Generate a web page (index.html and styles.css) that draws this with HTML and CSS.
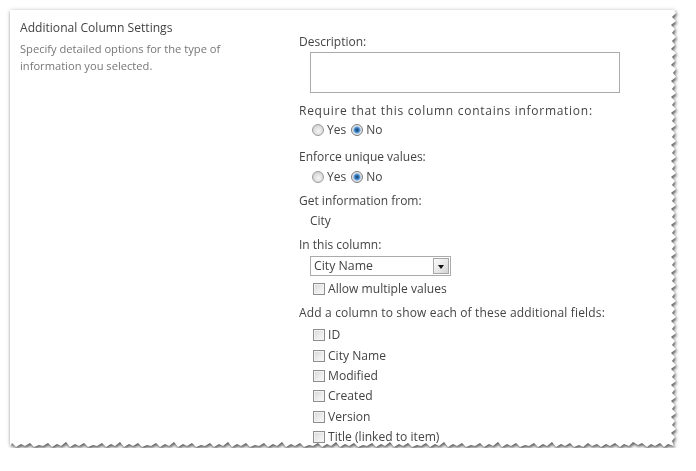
FILE: index.html
```html
<!DOCTYPE html>
<html lang="en">
<head>
<meta charset="utf-8">
<title>Additional Column Settings</title>
<link rel="stylesheet" href="styles.css">
</head>
<body>
<div class="sheet">
  <div class="paper">
    <div class="info">
      <div class="info-title">Additional Column Settings</div>
      <div class="info-desc">Specify detailed options for the type of information you selected.</div>
    </div>
    <div class="body">
      <div class="group">
        <div class="lbl">Description:</div>
        <textarea class="textarea"></textarea>
      </div>
      <div class="group g-require">
        <div class="lbl lbl-wide">Require that this column contains information:</div>
        <div class="radios">
          <label class="opt"><span class="radio"></span>Yes</label>
          <label class="opt"><span class="radio checked"></span>No</label>
        </div>
      </div>
      <div class="group g-unique">
        <div class="lbl">Enforce unique values:</div>
        <div class="radios">
          <label class="opt"><span class="radio"></span>Yes</label>
          <label class="opt"><span class="radio checked"></span>No</label>
        </div>
      </div>
      <div class="group g-get">
        <div class="lbl">Get information from:</div>
        <div class="value">City</div>
      </div>
      <div class="group g-col">
        <div class="lbl">In this column:</div>
        <div class="select">
          <span class="select-text">City Name</span>
          <span class="select-btn"><span class="tri"></span></span>
        </div>
        <label class="check-row"><span class="check"></span>Allow multiple values</label>
      </div>
      <div class="group g-add">
        <div class="lbl lbl-add">Add a column to show each of these additional fields:</div>
        <div class="checks">
          <label class="check-row"><span class="check"></span>ID</label>
          <label class="check-row"><span class="check"></span>City Name</label>
          <label class="check-row"><span class="check"></span>Modified</label>
          <label class="check-row"><span class="check"></span>Created</label>
          <label class="check-row"><span class="check"></span>Version</label>
          <label class="check-row"><span class="check"></span>Title (linked to item)</label>
        </div>
      </div>
    </div>
  </div>
</div>
</body>
</html>
```
FILE: styles.css
```css
html, body {
  margin: 0;
  background: #ffffff;
}

body {
  font-family: "Open Sans", "Noto Sans", "Liberation Sans", sans-serif;
  font-size: 12px;
  color: #444444;
}

.sheet {
  margin: 10px 0 0 10px;
  width: 666px;
  height: 438px;
  filter: drop-shadow(0 0 2px rgba(0, 0, 0, 0.16)) drop-shadow(1px 2px 1.5px rgba(0, 0, 0, 0.6));
}

.paper {
  box-sizing: border-box;
  height: 100%;
  background: #ffffff;
  padding: 9px 0 0 10px;
  display: grid;
  grid-template-columns: 279px 1fr;
  align-items: start;
  clip-path: polygon(0px 0px, 664px 0px, 666px 3px, 662px 7px, 666px 11px, 661px 15px, 665px 19px, 662px 23px, 666px 27px, 662px 31px, 665px 35px, 661px 39px, 666px 43px, 662px 47px, 665px 51px, 661px 55px, 666px 59px, 663px 63px, 666px 67px, 661px 71px, 665px 75px, 662px 79px, 666px 83px, 661px 87px, 665px 91px, 662px 95px, 666px 99px, 661px 103px, 665px 107px, 662px 111px, 666px 115px, 661px 119px, 665px 123px, 662px 127px, 666px 131px, 661px 135px, 665px 139px, 662px 143px, 666px 147px, 661px 151px, 665px 155px, 662px 159px, 666px 163px, 661px 167px, 665px 171px, 662px 175px, 666px 179px, 661px 183px, 665px 187px, 662px 191px, 666px 195px, 661px 199px, 665px 203px, 662px 207px, 666px 211px, 661px 215px, 665px 219px, 662px 223px, 666px 227px, 661px 231px, 665px 235px, 662px 239px, 666px 243px, 661px 247px, 665px 251px, 662px 255px, 666px 259px, 661px 263px, 665px 267px, 662px 271px, 666px 275px, 661px 279px, 665px 283px, 662px 287px, 666px 291px, 661px 295px, 665px 299px, 662px 303px, 666px 307px, 661px 311px, 665px 315px, 662px 319px, 666px 323px, 661px 327px, 665px 331px, 662px 335px, 666px 339px, 661px 343px, 665px 347px, 662px 351px, 666px 355px, 661px 359px, 665px 363px, 662px 367px, 666px 371px, 661px 375px, 665px 379px, 662px 383px, 666px 387px, 661px 391px, 665px 395px, 662px 399px, 666px 403px, 661px 407px, 665px 411px, 662px 415px, 666px 419px, 661px 423px, 665px 427px, 662px 431px, 664px 436px, 658px 434px, 654px 437px, 650px 433px, 645px 436px, 641px 434px, 637px 437px, 632px 433px, 628px 435px, 623px 432px, 619px 436px, 614px 434px, 610px 437px, 605px 433px, 600px 436px, 596px 434px, 591px 437px, 587px 434px, 582px 436px, 578px 433px, 573px 437px, 569px 435px, 564px 437px, 560px 433px, 555px 436px, 551px 434px, 546px 437px, 542px 432px, 537px 436px, 533px 434px, 528px 437px, 524px 433px, 519px 436px, 515px 435px, 510px 437px, 506px 433px, 501px 436px, 497px 434px, 492px 437px, 488px 432px, 483px 436px, 479px 434px, 474px 437px, 470px 433px, 465px 436px, 461px 435px, 456px 437px, 452px 433px, 447px 436px, 443px 434px, 438px 437px, 434px 432px, 429px 436px, 425px 434px, 420px 437px, 416px 433px, 411px 436px, 407px 435px, 402px 437px, 398px 433px, 393px 436px, 389px 434px, 384px 437px, 380px 432px, 375px 436px, 371px 434px, 366px 437px, 362px 433px, 357px 436px, 353px 435px, 348px 437px, 344px 433px, 339px 436px, 335px 434px, 330px 437px, 326px 432px, 321px 436px, 317px 434px, 312px 437px, 308px 433px, 303px 436px, 299px 435px, 294px 437px, 290px 433px, 285px 436px, 281px 434px, 276px 437px, 272px 432px, 267px 436px, 263px 434px, 258px 437px, 254px 433px, 249px 436px, 245px 435px, 240px 437px, 236px 433px, 231px 436px, 227px 434px, 222px 437px, 218px 432px, 213px 436px, 209px 434px, 204px 437px, 200px 433px, 195px 436px, 191px 435px, 186px 437px, 182px 433px, 177px 436px, 173px 434px, 168px 437px, 164px 432px, 159px 436px, 155px 434px, 150px 437px, 146px 433px, 141px 436px, 137px 435px, 132px 437px, 128px 433px, 123px 436px, 119px 434px, 114px 437px, 110px 432px, 105px 436px, 101px 434px, 96px 437px, 92px 433px, 87px 436px, 83px 435px, 78px 437px, 74px 433px, 69px 436px, 65px 434px, 60px 437px, 56px 432px, 51px 436px, 47px 434px, 42px 437px, 38px 433px, 33px 436px, 29px 435px, 24px 437px, 20px 433px, 15px 436px, 11px 434px, 6px 437px, 2px 433px, 0px 436px);
}

/* left column */
.info-title {
  font-size: 12.1px;
  line-height: 18px;
  color: #444444;
}

.info-desc {
  margin-top: 3px;
  width: 230px;
  font-size: 11.15px;
  line-height: 17px;
  color: #777777;
}

/* right column */
.body {
  padding-top: 14px;
}

.lbl {
  line-height: 18px;
  white-space: nowrap;
}

.lbl-wide {
  letter-spacing: 0.72px;
}

.lbl-add {
  letter-spacing: 0.16px;
}

.group + .group {
  margin-top: 6px;
}

.g-require {
  margin-top: 9px !important;
}

.g-unique {
  margin-top: 8px !important;
}

.g-get {
  margin-top: 5px !important;
}

.textarea {
  display: block;
  box-sizing: border-box;
  width: 310px;
  height: 41px;
  margin: 1px 0 0 11px;
  padding: 0;
  border: 1px solid #ababab;
  background: #ffffff;
  resize: none;
  outline: none;
}

.radios {
  display: flex;
  align-items: center;
  height: 20px;
  padding-left: 13px;
  gap: 5px;
}

.g-unique .radios {
  margin-top: 1px;
}

.opt {
  display: flex;
  align-items: center;
  gap: 3px;
  line-height: 18px;
}

.radio {
  box-sizing: border-box;
  width: 12px;
  height: 12px;
  border-radius: 50%;
  border: 1px solid #9a9a9a;
  background: radial-gradient(circle at 55% 60%, #f6f6f6 0, #dcdcdc 55%, #c9c9c9 100%);
}

.radio.checked {
  border-color: #7a7a7a;
  background: radial-gradient(circle at 50% 50%, #173d63 0, #2c6aa8 1.6px, #5b9bd8 2.8px, #a9c9ea 3.6px, #e4e4e4 4.2px, #f3f3f3 100%);
}

.value {
  margin: 2px 0 0 11px;
  line-height: 18px;
}

.select {
  box-sizing: border-box;
  display: flex;
  align-items: center;
  justify-content: space-between;
  width: 141px;
  height: 20px;
  margin: 2px 0 0 11px;
  padding: 0 1px 0 3px;
  border: 1px solid #ababab;
  background: #ffffff;
}

.select-text {
  line-height: 18px;
  font-size: 12.3px;
}

.select-btn {
  box-sizing: border-box;
  display: flex;
  align-items: center;
  justify-content: center;
  width: 16px;
  height: 16px;
  border: 1px solid #a6a6a6;
  background: linear-gradient(135deg, #fbfbfb 0%, #e6e6e6 60%, #d2d2d2 100%);
}

.tri {
  width: 0;
  height: 0;
  margin-top: 1px;
  border-left: 3.5px solid transparent;
  border-right: 3.5px solid transparent;
  border-top: 4px solid #111111;
}

.check-row {
  display: flex;
  align-items: center;
  gap: 3px;
  padding-left: 14px;
  line-height: 18px;
  font-size: 12.1px;
}

.g-col .check-row {
  margin-top: 4px;
}

.check {
  box-sizing: border-box;
  width: 12px;
  height: 12px;
  border: 1px solid #8e8e8e;
  background: linear-gradient(135deg, #d6d6d6 0%, #ececec 55%, #fbfbfb 100%);
  box-shadow: inset 0 0 0 1px #f2f2f2;
}

.checks {
  display: flex;
  flex-direction: column;
  margin-top: 3px;
}

.checks .check-row {
  height: 20.4px;
}
```
